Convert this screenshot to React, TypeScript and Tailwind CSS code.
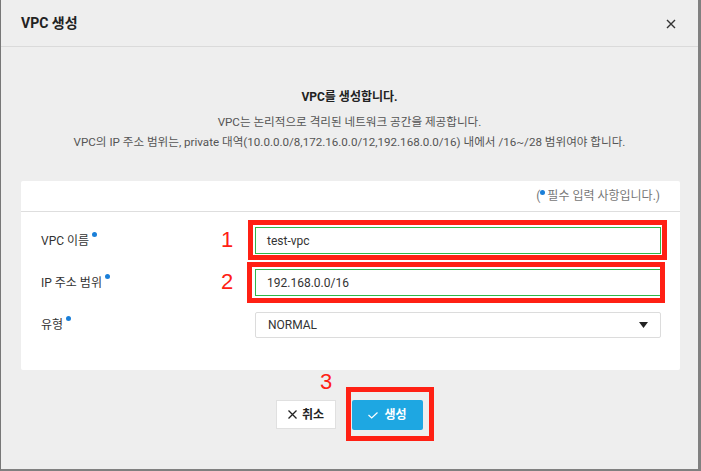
import React from "react";

const font = { fontFamily: "Roboto, 'Noto Sans CJK KR', 'Noto Sans', sans-serif" };

function Dot() {
  return <span className="inline-block w-[5px] h-[5px] rounded-full bg-[#1a7fd8] ml-[3px] relative -top-[6px]" />;
}

function Row({ label, children }: { label: string; children: React.ReactNode }) {
  return (
    <div className="flex items-center h-[27px]">
      <div className="w-[214px] text-[12px] text-[#333] flex items-center">
        {label}
        <Dot />
      </div>
      <div className="flex-1">{children}</div>
    </div>
  );
}

export default function App() {
  return (
    <div
      style={font}
      className="relative w-[701px] h-[471px] bg-[#eeeeee] border-l border-l-[#777] border-r-[3px] border-r-[#808080] border-b-2 border-b-[#808080] overflow-hidden"
    >
      {/* header */}
      <div className="h-[47px] flex items-center justify-between pl-[20px] pr-[22px] border-b border-[#dadada]">
        <div className="text-[14px] font-bold text-[#222]">VPC 생성</div>
        <svg width="10" height="10" viewBox="0 0 10 10" className="mt-[1px]">
          <path d="M1 1 L9 9 M9 1 L1 9" stroke="#333" strokeWidth="1.4" />
        </svg>
      </div>

      {/* description */}
      <div className="pt-[41px] text-center">
        <div className="text-[12px] font-bold text-[#222] leading-[18px]">VPC를 생성합니다.</div>
        <div className="mt-[6px] text-[11.6px] text-[#555] leading-[20px]">
          <div>VPC는 논리적으로 격리된 네트워크 공간을 제공합니다.</div>
          <div>VPC의 IP 주소 범위는, private 대역(10.0.0.0/8,172.16.0.0/12,192.168.0.0/16) 내에서 /16~/28 범위여야 합니다.</div>
        </div>
      </div>

      {/* card */}
      <div className="mt-[29px] ml-[20px] mr-[18px] bg-white rounded-[2px]">
        <div className="h-[31px] border-b border-[#dedede] flex items-center justify-end pr-[20px] text-[12px] text-[#777]">
          (<span className="inline-block w-[5px] h-[5px] rounded-full bg-[#1a7fd8] mr-[2px] relative -top-[4px]" />필수 입력 사항입니다.)
        </div>
        <div className="pl-[20px] pr-[19px] pt-[15px] pb-[32px] flex flex-col gap-[15px]">
          <Row label="VPC 이름">
            <div className="h-[27px] border border-[#2fb84a] flex items-center pl-[11px] text-[12px] text-[#333]">test-vpc</div>
          </Row>
          <Row label="IP 주소 범위">
            <div className="h-[27px] border border-[#2fb84a] flex items-center pl-[11px] text-[12px] text-[#333]">192.168.0.0/16</div>
          </Row>
          <Row label="유형">
            <div className="h-[26px] border border-[#dcdcdc] rounded-[2px] flex items-center justify-between pl-[12px] pr-[12px] text-[12px] text-[#333]">
              <span>NORMAL</span>
              <svg width="9" height="6" viewBox="0 0 9 6">
                <path d="M0 0 H9 L4.5 6 Z" fill="#222" />
              </svg>
            </div>
          </Row>
        </div>
      </div>

      {/* buttons */}
      <div className="mt-[30px] flex justify-center gap-[16px] pl-[0px]">
        <button className="w-[60px] h-[29px] bg-white border border-[#e0e0e0] flex items-center justify-center gap-[5px] text-[12px] font-bold text-[#222]">
          <svg width="9" height="9" viewBox="0 0 9 9">
            <path d="M0.5 0.5 L8.5 8.5 M8.5 0.5 L0.5 8.5" stroke="#222" strokeWidth="1.3" />
          </svg>
          취소
        </button>
        <button className="w-[71px] h-[30px] bg-[#1ea7e2] rounded-[2px] flex items-center justify-center gap-[6px] text-[12px] font-bold text-white">
          <svg width="10" height="7" viewBox="0 0 10 7">
            <path d="M0.5 3 L3.7 6 L9.5 0.5" stroke="#fff" strokeWidth="1.2" fill="none" />
          </svg>
          생성
        </button>
      </div>

      {/* annotations */}
      <div className="absolute left-[247px] top-[220px] w-[419px] h-[40px] border-[5px] border-[#ff2014]" />
      <div className="absolute left-[246px] top-[262px] w-[418px] h-[41px] border-[5px] border-[#ff2014]" />
      <div className="absolute left-[345px] top-[387px] w-[88px] h-[54px] border-[5px] border-[#ff2014]" />
      <div className="absolute left-[220px] top-[228px] text-[22px] leading-[24px] text-[#ff2014]" style={{ fontFamily: "'Liberation Sans', Arial, sans-serif" }}>1</div>
      <div className="absolute left-[220px] top-[270px] text-[22px] leading-[24px] text-[#ff2014]" style={{ fontFamily: "'Liberation Sans', Arial, sans-serif" }}>2</div>
      <div className="absolute left-[319px] top-[370px] text-[22px] leading-[24px] text-[#ff2014]" style={{ fontFamily: "'Liberation Sans', Arial, sans-serif" }}>3</div>
    </div>
  );
}
